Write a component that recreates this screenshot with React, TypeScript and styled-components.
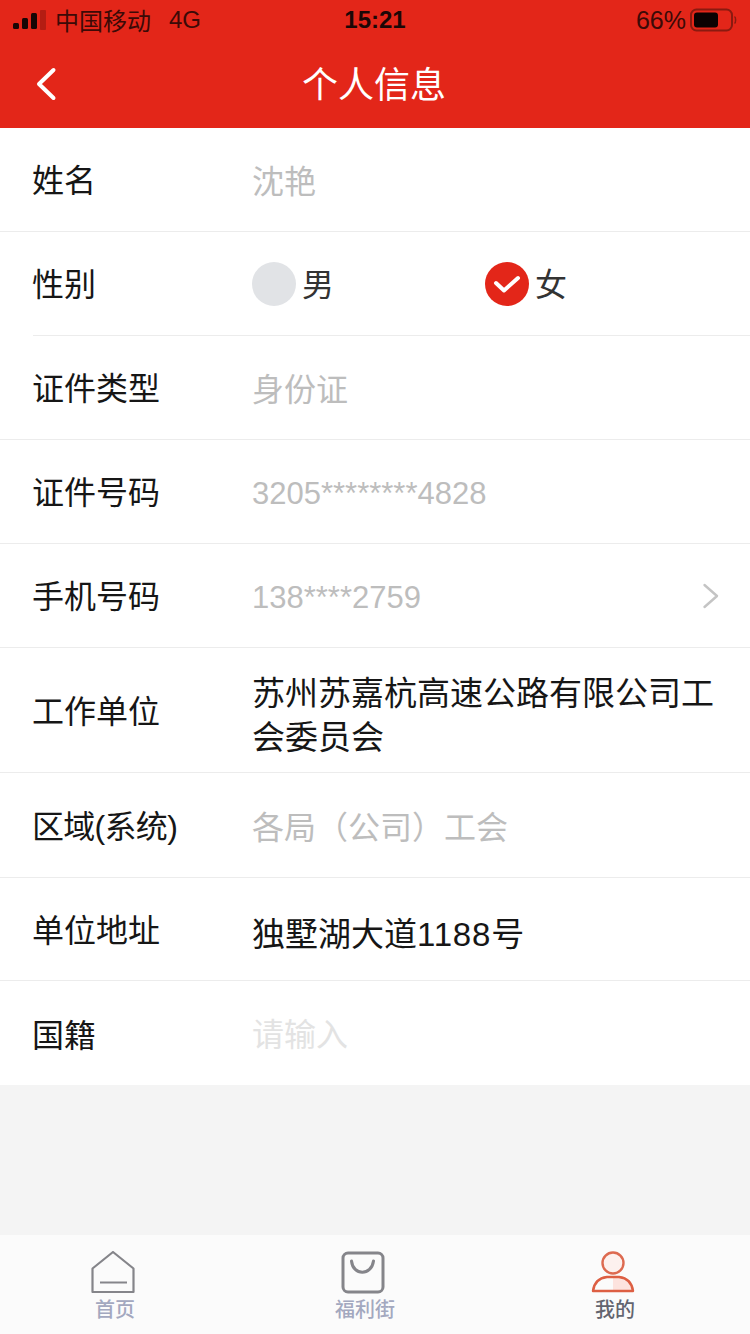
import React from "react";
import styled, { createGlobalStyle } from "styled-components";

const FONT = `"Liberation Sans", "Noto Sans CJK SC", sans-serif`;

const GlobalStyle = createGlobalStyle`
  html, body {
    margin: 0;
    padding: 0;
    background: #f4f4f4;
    font-family: ${FONT};
  }
  * { box-sizing: border-box; }
`;

const Page = styled.div`
  width: 750px;
  height: 1334px;
  display: flex;
  flex-direction: column;
  overflow: hidden;
  background: #f4f4f4;
`;

const Top = styled.div`
  background: #e32619;
  height: 128px;
  flex: none;
`;

const StatusBar = styled.div`
  height: 40px;
  padding: 0 13px;
  display: grid;
  grid-template-columns: 1fr auto 1fr;
  align-items: center;
  color: #1c0706;
`;

const StatusLeft = styled.div`
  display: flex;
  align-items: center;
  font-size: 24px;
`;

const Carrier = styled.span`
  margin-left: 9px;
  padding-bottom: 2px;
  color: #3c0a07;
`;

const Network = styled.span`
  margin-left: 18px;
  color: #3c0a07;
`;

const Clock = styled.div`
  font-size: 24px;
  font-weight: 700;
`;

const StatusRight = styled.div`
  display: flex;
  align-items: center;
  justify-content: flex-end;
  gap: 4px;
  font-size: 25px;
  color: #3c0a07;
`;

const NavBar = styled.div`
  height: 88px;
  position: relative;
  display: flex;
  align-items: center;
  justify-content: center;
  padding-bottom: 4px;
`;

const BackButton = styled.div`
  position: absolute;
  left: 35px;
  top: 27px;
  display: flex;
`;

const Title = styled.div`
  color: #fff;
  font-size: 36px;
  margin-right: 2px;
`;

const Form = styled.div`
  background: #fff;
  flex: none;
`;

const Row = styled.div<{ $height: number; $inset?: boolean }>`
  height: ${(p) => p.$height}px;
  display: flex;
  align-items: center;
  padding-left: 33px;
  position: relative;
  &::after {
    content: "";
    position: absolute;
    right: 0;
    bottom: 0;
    left: ${(p) => (p.$inset ? "33px" : "0")};
    height: 1px;
    background: #ececec;
  }
  &:last-child::after {
    display: none;
  }
`;

const Label = styled.div<{ $tight?: boolean; $low?: boolean }>`
  width: 219px;
  flex: none;
  font-size: 32px;
  padding-bottom: ${(p) => (p.$low ? "0" : "4px")};
  margin-left: -1px;
  margin-right: 1px;
  letter-spacing: ${(p) => (p.$tight ? "-0.7px" : "0")};
  color: #161616;
`;

const Value = styled.div<{ $tone?: "muted" | "faint" | "dark"; $digits?: boolean }>`
  flex: 1;
  font-size: ${(p) => (p.$tone === "dark" ? "33px" : p.$digits ? "31px" : "32px")};
  line-height: 44px;
  padding-top: ${(p) => (p.$tone === "dark" ? "10px" : "4px")};
  padding-right: 30px;
  color: ${(p) =>
    p.$tone === "dark" ? "#161616" : p.$tone === "faint" ? "#e3e3e3" : "#bdbdbd"};
`;

const HouseNumber = styled.span`
  letter-spacing: 0.8px;
`;

const RadioGroup = styled.div`
  display: flex;
  align-items: center;
`;

const RadioItem = styled.div`
  width: 233px;
  display: flex;
  align-items: center;
  gap: 6px;
  font-size: 32px;
  color: #333;
`;

const RadioText = styled.span`
  padding-bottom: 4px;
`;

const RadioDot = styled.div<{ $checked?: boolean }>`
  width: 44px;
  height: 44px;
  border-radius: 50%;
  display: flex;
  align-items: center;
  justify-content: center;
  background: ${(p) => (p.$checked ? "#e32619" : "#e1e3e6")};
`;

const Arrow = styled.div`
  position: absolute;
  right: 30px;
  top: 50%;
  transform: translateY(-50%);
  display: flex;
`;

const TabBar = styled.div`
  margin-top: auto;
  height: 99px;
  margin-left: -10px;
  width: 760px;
  background: #fbfbfb;
  display: grid;
  grid-template-columns: repeat(3, 250px);
`;

const Tab = styled.div<{ $active?: boolean }>`
  display: flex;
  flex-direction: column;
  align-items: center;
  padding-top: 16px;
  font-size: 20px;
  font-weight: 500;
  line-height: 26px;
  color: ${(p) => (p.$active ? "#63656f" : "#a3a8bf")};
`;

const TabIcon = styled.div`
  width: 46px;
  height: 46px;
  margin-right: 4px;
  display: flex;
`;

const SignalIcon = () => (
  <svg width="33" height="20" viewBox="0 0 33 20">
    <rect x="0" y="13" width="6" height="6" rx="1.5" fill="#170605" />
    <rect x="9" y="8" width="6" height="11" rx="1.5" fill="#170605" />
    <rect x="18" y="3" width="6" height="16" rx="1.5" fill="#170605" />
    <rect x="27" y="0" width="6" height="20" rx="1" fill="#b41d13" />
  </svg>
);

const BatteryIcon = () => (
  <svg width="47" height="24" viewBox="0 0 47 24">
    <rect x="1" y="1.5" width="41" height="21" rx="5.5" fill="none" stroke="#8a1a10" strokeWidth="2" />
    <rect x="4" y="4.5" width="24" height="15" rx="3" fill="#0c0202" />
    <path d="M44.5 8.5 C46 9.5 46 14.5 44.5 15.5" fill="none" stroke="#8a1a10" strokeWidth="1.5" />
  </svg>
);

const BackIcon = () => (
  <svg width="22" height="34" viewBox="0 0 22 34">
    <path d="M18.5 3 L4 17 L18.5 31" fill="none" stroke="#fff" strokeWidth="4" strokeLinecap="round" strokeLinejoin="round" />
  </svg>
);

const ChevronIcon = () => (
  <svg width="18" height="28" viewBox="0 0 18 28">
    <path d="M2.5 3 L15 14 L2.5 25" fill="none" stroke="#c4c4c4" strokeWidth="2.4" strokeLinecap="round" strokeLinejoin="round" />
  </svg>
);

const CheckIcon = () => (
  <svg width="28" height="22" viewBox="0 0 28 22">
    <path d="M3 10 L11 17.5 L25 5" fill="none" stroke="#fff" strokeWidth="4" strokeLinecap="round" strokeLinejoin="round" />
  </svg>
);

const HomeIcon = () => (
  <svg width="46" height="46" viewBox="0 0 46 46">
    <path d="M2.5 41 V17.5 L23 1 L43.5 17.5 V41 Z" fill="none" stroke="#85858a" strokeWidth="2.2" strokeLinejoin="round" />
    <path d="M10 31.5 H37" stroke="#85858a" strokeWidth="2" />
  </svg>
);

const BagIcon = () => (
  <svg width="46" height="46" viewBox="0 0 46 46">
    <rect x="3" y="2" width="40" height="39" rx="5" fill="none" stroke="#85858a" strokeWidth="3" />
    <path d="M11.5 10 C13 25 31.5 25 33.5 10" fill="none" stroke="#85858a" strokeWidth="3" strokeLinecap="round" />
  </svg>
);

const UserIcon = () => (
  <svg width="46" height="46" viewBox="0 0 46 46">
    <path d="M23 26 H29 C36 27 42 32 43 40 H23 Z" fill="#fde3de" />
    <circle cx="23" cy="12" r="10.5" fill="#fdf1ee" stroke="#dd6a50" strokeWidth="2.4" />
    <path d="M3 40 C4 32 9 27 17 26 H29 C37 27 42 32 43 40 Z" fill="none" stroke="#dd5f43" strokeWidth="2.4" strokeLinejoin="round" />
  </svg>
);

export default function App() {
  return (
    <Page>
      <GlobalStyle />
      <Top>
        <StatusBar>
          <StatusLeft>
            <SignalIcon />
            <Carrier>中国移动</Carrier>
            <Network>4G</Network>
          </StatusLeft>
          <Clock>15:21</Clock>
          <StatusRight>
            66%
            <BatteryIcon />
          </StatusRight>
        </StatusBar>
        <NavBar>
          <BackButton>
            <BackIcon />
          </BackButton>
          <Title>个人信息</Title>
        </NavBar>
      </Top>

      <Form>
        <Row $height={104}>
          <Label>姓名</Label>
          <Value>沈艳</Value>
        </Row>
        <Row $height={104} $inset>
          <Label>性别</Label>
          <RadioGroup>
            <RadioItem>
              <RadioDot />
              <RadioText>男</RadioText>
            </RadioItem>
            <RadioItem>
              <RadioDot $checked>
                <CheckIcon />
              </RadioDot>
              <RadioText>女</RadioText>
            </RadioItem>
          </RadioGroup>
        </Row>
        <Row $height={104}>
          <Label>证件类型</Label>
          <Value>身份证</Value>
        </Row>
        <Row $height={104}>
          <Label>证件号码</Label>
          <Value $digits>3205********4828</Value>
        </Row>
        <Row $height={104}>
          <Label>手机号码</Label>
          <Value $digits>138****2759</Value>
          <Arrow>
            <ChevronIcon />
          </Arrow>
        </Row>
        <Row $height={125}>
          <Label>工作单位</Label>
          <Value $tone="dark">苏州苏嘉杭高速公路有限公司工会委员会</Value>
        </Row>
        <Row $height={105}>
          <Label $tight>区域(系统)</Label>
          <Value>各局（公司）工会</Value>
        </Row>
        <Row $height={103}>
          <Label>单位地址</Label>
          <Value $tone="dark">
            独墅湖大道<HouseNumber>1188</HouseNumber>号
          </Value>
        </Row>
        <Row $height={104}>
          <Label $low>国籍</Label>
          <Value $tone="faint">请输入</Value>
        </Row>
      </Form>

      <TabBar>
        <Tab>
          <TabIcon>
            <HomeIcon />
          </TabIcon>
          首页
        </Tab>
        <Tab>
          <TabIcon>
            <BagIcon />
          </TabIcon>
          福利街
        </Tab>
        <Tab $active>
          <TabIcon>
            <UserIcon />
          </TabIcon>
          我的
        </Tab>
      </TabBar>
    </Page>
  );
}
